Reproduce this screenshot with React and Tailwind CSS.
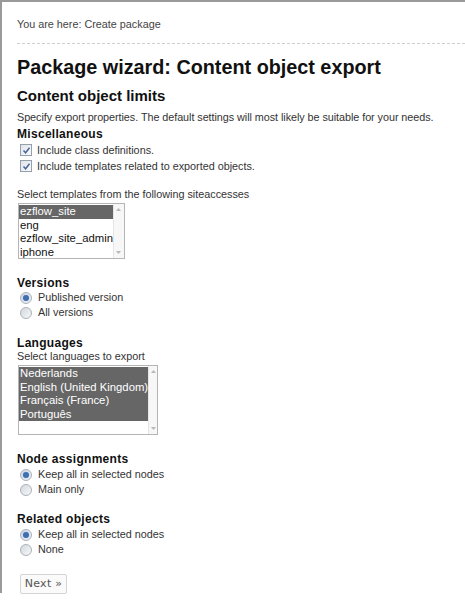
import React from "react";

const FONT = { fontFamily: '"Liberation Sans", Arial, sans-serif' };

function Checkbox() {
  return (
    <span className="inline-flex w-[12px] h-[12px] border border-[#94a0ae] bg-gradient-to-br from-[#dfe3e8] to-[#fafbfc] items-center justify-center shrink-0">
      <svg width="9" height="9" viewBox="0 0 9 9">
        <path d="M1.5 4.5 L3.6 6.8 L7.5 1.8" fill="none" stroke="#4a66a0" strokeWidth="1.5" />
      </svg>
    </span>
  );
}

function Radio({ checked }) {
  return (
    <span className="inline-flex w-[12px] h-[12px] rounded-full border border-[#a9b1bb] bg-gradient-to-br from-[#d4d8dd] to-[#f7f8f9] items-center justify-center shrink-0">
      {checked && <span className="w-[6px] h-[6px] rounded-full bg-[#3f6fb0] shadow-[0_0_2px_#9fc0e8]" />}
    </span>
  );
}

function CheckRow({ label }) {
  return (
    <div className="flex items-center gap-[5px] pl-[3px] h-[16px]">
      <Checkbox />
      <span>{label}</span>
    </div>
  );
}

function RadioRow({ label, checked }) {
  return (
    <div className="flex items-center gap-[6px] pl-[3px] h-[15px]">
      <Radio checked={checked} />
      <span>{label}</span>
    </div>
  );
}

function ListBox({ items, selected, width, height }) {
  return (
    <div className={`flex border border-[#b5b5b5] bg-white ${width} ${height}`}>
      <div className="flex-1 flex flex-col pt-[1px] text-[11.3px]">
        {items.map((it) => (
          <div
            key={it}
            className={`h-[13.5px] leading-[13.5px] pl-[1px] whitespace-nowrap ${selected.includes(it) ? "bg-[#666666] text-white" : "text-[#111]"}`}
          >
            {it}
          </div>
        ))}
      </div>
      <div className="w-[13px] flex flex-col justify-between items-center bg-[#f7f7f7] border-l border-[#e6e6e6] py-[4px]">
        <svg width="5" height="3" viewBox="0 0 5 3"><path d="M0 3 L2.5 0 L5 3 Z" fill="#b8b8b8" /></svg>
        <svg width="5" height="3" viewBox="0 0 5 3"><path d="M0 0 L2.5 3 L5 0 Z" fill="#b8b8b8" /></svg>
      </div>
    </div>
  );
}

function Heading({ children }) {
  return <div className="font-bold text-[12px] leading-[14px] text-[#111] tracking-[0.3px]">{children}</div>;
}

export default function App() {
  return (
    <div className="w-[465px] h-[600px] bg-white overflow-hidden" style={FONT}>
      <div className="h-[593px] border-t-2 border-l-2 border-[#9a9a9a] pl-[15px] text-[10.8px] text-[#333]">
        <div className="h-[41px] pt-[15px] leading-[14px] text-[#444]">You are here: Create package</div>
        <div className="border-t border-dashed border-[#cfcfcf]" />
        <h1 className="mt-[11px] text-[19.8px] leading-[24px] font-bold text-[#111]">Package wizard: Content object export</h1>
        <h2 className="mt-[8px] text-[15px] leading-[18px] font-bold text-[#111]">Content object limits</h2>
        <p className="mt-[5px] leading-[14px] whitespace-nowrap tracking-[-0.05px]">Specify export properties. The default settings will most likely be suitable for your needs.</p>

        <div className="mt-[3px]">
          <Heading>Miscellaneous</Heading>
          <div className="mt-[1px]">
            <CheckRow label="Include class definitions." />
            <CheckRow label="Include templates related to exported objects." />
          </div>
        </div>

        <div className="mt-[13px] leading-[14px]">Select templates from the following siteaccesses</div>
        <div className="mt-[2px] pl-[1px]">
          <ListBox
            items={["ezflow_site", "eng", "ezflow_site_admin", "iphone"]}
            selected={["ezflow_site"]}
            width="w-[107px]"
            height="h-[56px]"
          />
        </div>

        <div className="mt-[17px]">
          <Heading>Versions</Heading>
          <RadioRow label="Published version" checked />
          <RadioRow label="All versions" />
        </div>

        <div className="mt-[16px]">
          <Heading>Languages</Heading>
          <div className="leading-[13px]">Select languages to export</div>
          <div className="mt-[2px] pl-[1px]">
            <ListBox
              items={["Nederlands", "English (United Kingdom)", "Français (France)", "Português"]}
              selected={["Nederlands", "English (United Kingdom)", "Français (France)", "Português"]}
              width="w-[140px]"
              height="h-[70px]"
            />
          </div>
        </div>

        <div className="mt-[17px]">
          <Heading>Node assignments</Heading>
          <div className="mt-[1px]">
            <RadioRow label="Keep all in selected nodes" checked />
            <RadioRow label="Main only" />
          </div>
        </div>

        <div className="mt-[15px]">
          <Heading>Related objects</Heading>
          <div className="mt-[1px]">
            <RadioRow label="Keep all in selected nodes" checked />
            <RadioRow label="None" />
          </div>
        </div>

        <div className="mt-[17px] pl-[3px]">
          <button
            className="h-[20px] w-[47px] border border-[#d4d4d4] rounded-[2px] bg-[#fafafa] text-[11px] text-[#555] tracking-[0.3px]"
            style={{ fontFamily: '"DejaVu Sans", Verdana, sans-serif' }}
          >
            Next »
          </button>
        </div>
      </div>
    </div>
  );
}
